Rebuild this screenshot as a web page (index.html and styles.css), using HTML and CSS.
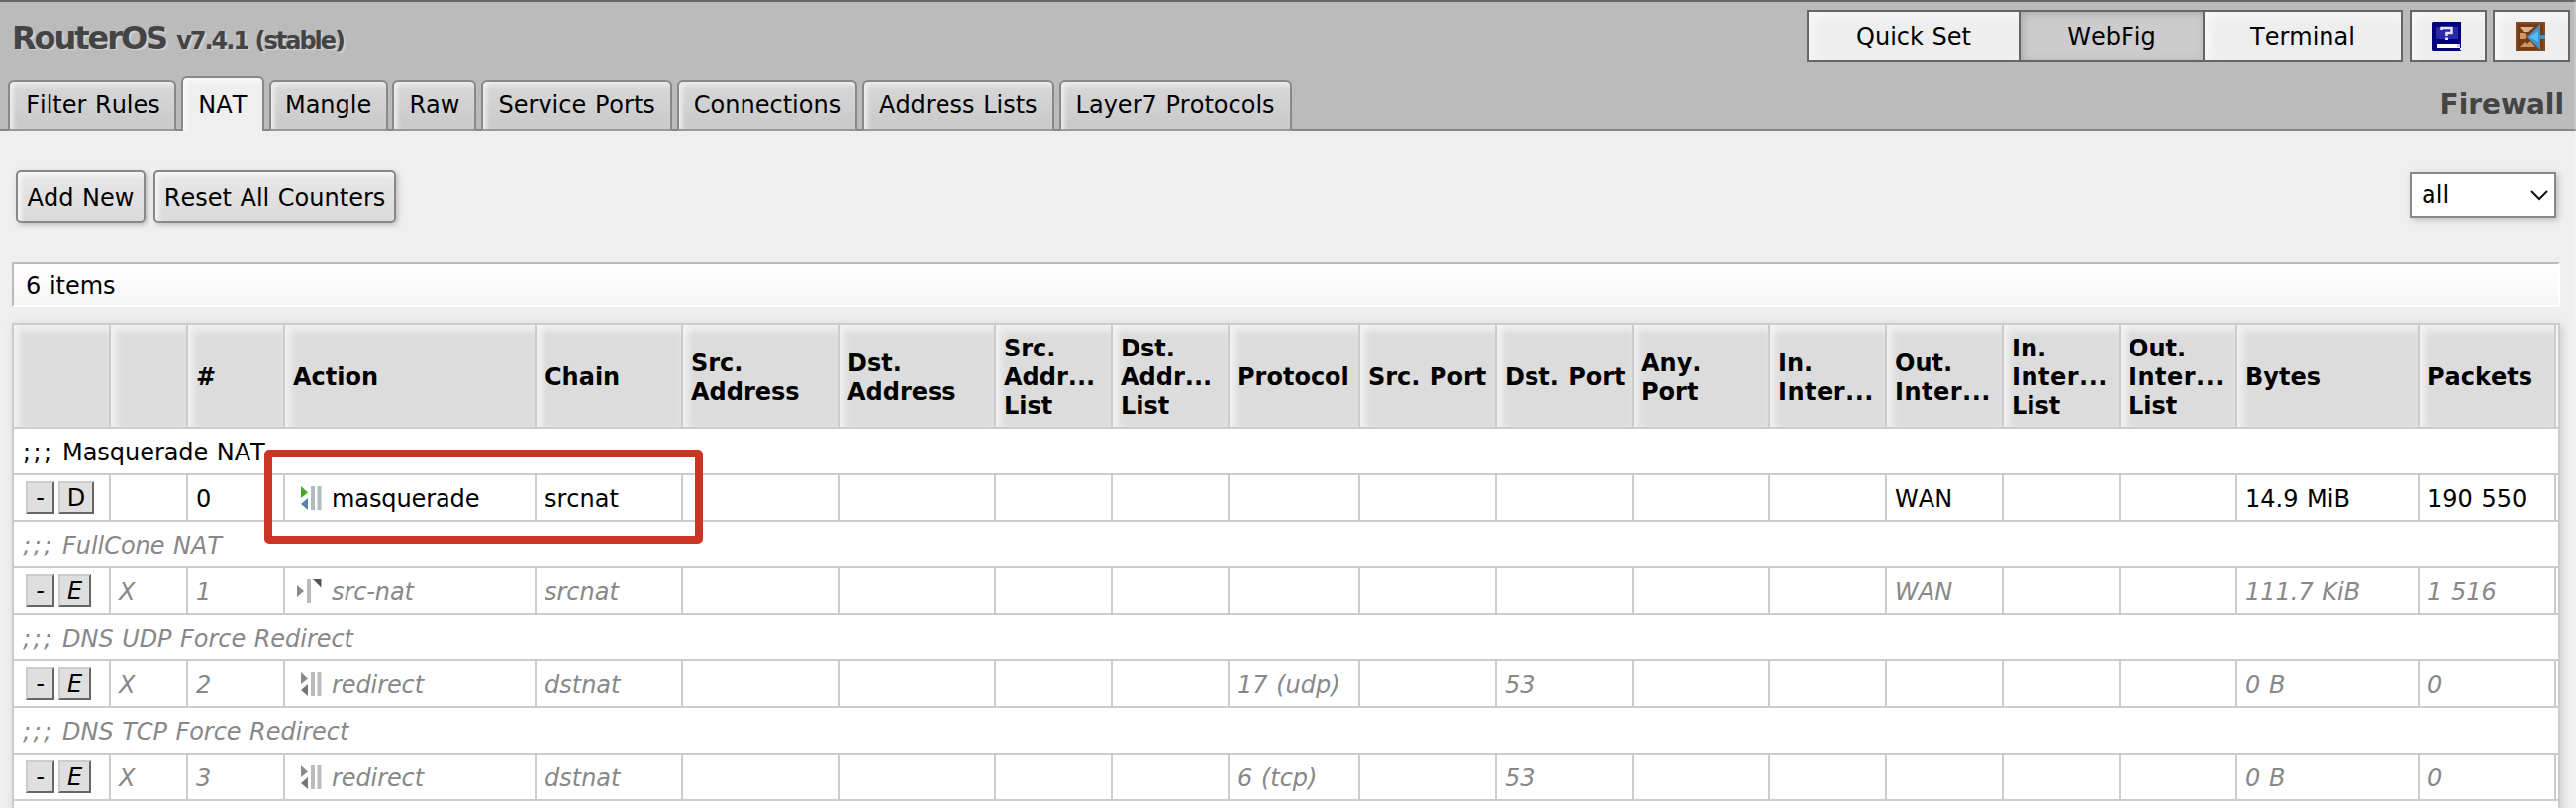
FILE: index.html
```html
<!DOCTYPE html>
<html lang="en">
<head>
<meta charset="utf-8">
<title>RouterOS - Firewall NAT</title>
<link rel="stylesheet" href="styles.css">
</head>
<body>
<svg width="0" height="0" class="defs">
  <symbol id="redirect" viewBox="0 0 32 32"><path class="a" d="M8 4L15 10.500L8 16z"/><path class="b" d="M15 16V28L8 22z"/><path class="c" d="M18 4h4v24h-4zM24.500 4h4v24h-4z"/></symbol>
  <symbol id="srcnat" viewBox="0 0 32 32"><path class="a" d="M4 10L11 16L4 22z"/><path class="c" d="M14 4h4v24h-4z"/><path class="d" d="M20 4h8.500v8.500z"/></symbol>
</svg>
<header class="top">
  <div class="brand-row">
    <h1 class="brand">RouterOS <small>v7.4.1 (stable)</small></h1>
    <nav class="modes">
      <div class="group"><a class="quick">Quick Set</a><a class="webfig">WebFig</a><a class="term">Terminal</a></div>
      <a class="tool"><svg width="30" height="30" viewBox="0 0 30 30"><path fill="#00007c" d="M1 0h28v26h-1v2h1v2H1L0 29V1z"/><path fill="#2a2aa5" d="M4 5h22v12H4z"/><path fill="none" stroke="#e4e4f6" stroke-width="2.500" d="M9.500 8V6h10v5h-5v3"/><path fill="#e4e4f6" d="M13 15.500h3v2.500h-3z"/><path fill="#fff" d="M5 22h23v4H5z"/><path fill="#c9cfd4" d="M25 22h3v3h-3z"/></svg></a>
      <a class="tool"><svg width="30" height="30" viewBox="0 0 30 30"><path fill="#84491f" d="M0 0h30v30H0z"/><path fill="#733b16" d="M2 2h26v26H2z"/><path fill="#dfb28c" d="M4 5h15l-6 5H8z"/><path fill="#cf9566" d="M4 11h5l3 3-3 3H4zM4 25l5-5 3 2 3-3 5 6z"/><path fill="#3c93d0" d="M25 2v11h5v4h-5v11L12 15z"/><path fill="#5cb8f2" d="M23 9v11l-9-5z"/></svg></a>
    </nav>
  </div>
  <div class="tab-row">
    <nav class="tabs">
      <a class="tab t1">Filter Rules</a><a class="tab t2 active">NAT</a><a class="tab t3">Mangle</a><a class="tab t4">Raw</a><a class="tab t5">Service Ports</a><a class="tab t6">Connections</a><a class="tab t7">Address Lists</a><a class="tab t8">Layer7 Protocols</a>
    </nav>
    <h2 class="page">Firewall</h2>
  </div>
</header>
<main>
  <div class="toolbar">
    <a class="btn add">Add New</a><a class="btn reset">Reset All Counters</a>
    <div class="select">all<svg width="20" height="12" viewBox="0 0 20 12"><path d="M2 2L10 10L18 2" fill="none" stroke="#111" stroke-width="2"/></svg></div>
  </div>
  <div class="count">6 items</div>
  <table class="list">
    <colgroup><col class="w98"><col class="w78"><col class="w98"><col class="w254"><col class="w148"><col class="w158"><col class="w158"><col class="w118"><col class="w118"><col class="w132"><col class="w138"><col class="w138"><col class="w138"><col class="w118"><col class="w118"><col class="w118"><col class="w118"><col class="w184"><col class="w138"><col class="w2"></colgroup>
    <thead><tr><th></th><th></th><th>#</th><th>Action</th><th>Chain</th><th>Src.<br>Address</th><th>Dst.<br>Address</th><th>Src.<br>Addr...<br>List</th><th>Dst.<br>Addr...<br>List</th><th>Protocol</th><th>Src. Port</th><th>Dst. Port</th><th>Any.<br>Port</th><th>In.<br><span class="int">Inter...</span></th><th>Out.<br><span class="int">Inter...</span></th><th>In.<br><span class="int">Inter...</span><br>List</th><th>Out.<br><span class="int">Inter...</span><br>List</th><th>Bytes</th><th>Packets</th><th class="end"></th></tr></thead>
    <tbody>
      <tr><td class="note" colspan="20"><span class="semi">;;;</span> Masquerade NAT</td></tr>
      <tr><td class="ops"><div><b>-</b><b class="wide">D</b></div></td><td></td><td>0</td><td><div class="act"><svg class="ico color"><use href="#redirect"/></svg>masquerade</div></td><td>srcnat</td><td></td><td></td><td></td><td></td><td></td><td></td><td></td><td></td><td></td><td>WAN</td><td></td><td></td><td>14.9 MiB</td><td>190 550</td><td class="end"></td></tr>
    </tbody>
    <tbody class="off">
      <tr><td class="note" colspan="20"><span class="semi">;;;</span> FullCone NAT</td></tr>
      <tr><td class="ops"><div><b>-</b><b class="mid">E</b></div></td><td>X</td><td>1</td><td><div class="act"><svg class="ico"><use href="#srcnat"/></svg>src-nat</div></td><td>srcnat</td><td></td><td></td><td></td><td></td><td></td><td></td><td></td><td></td><td></td><td>WAN</td><td></td><td></td><td>111.7 KiB</td><td>1 516</td><td class="end"></td></tr>
      <tr><td class="note" colspan="20"><span class="semi">;;;</span> DNS UDP Force Redirect</td></tr>
      <tr><td class="ops"><div><b>-</b><b class="mid">E</b></div></td><td>X</td><td>2</td><td><div class="act"><svg class="ico"><use href="#redirect"/></svg>redirect</div></td><td>dstnat</td><td></td><td></td><td></td><td></td><td>17 (udp)</td><td></td><td>53</td><td></td><td></td><td></td><td></td><td></td><td>0 B</td><td>0</td><td class="end"></td></tr>
      <tr><td class="note" colspan="20"><span class="semi">;;;</span> DNS TCP Force Redirect</td></tr>
      <tr><td class="ops"><div><b>-</b><b class="mid">E</b></div></td><td>X</td><td>3</td><td><div class="act"><svg class="ico"><use href="#redirect"/></svg>redirect</div></td><td>dstnat</td><td></td><td></td><td></td><td></td><td>6 (tcp)</td><td></td><td>53</td><td></td><td></td><td></td><td></td><td></td><td>0 B</td><td>0</td><td class="end"></td></tr>
      <tr><td class="note" colspan="20"></td></tr>
    </tbody>
  </table>
</main>
<div class="marker"></div>
<div class="edge"></div>
</body>
</html>
```
FILE: styles.css
```css
* { box-sizing: border-box; }
html, body { height: 816px; overflow: hidden; }
body {
  margin: 0;
  position: relative;
  background: #efefef;
  color: #000;
  font: 24px/29px "DejaVu Sans", Verdana, sans-serif;
  font-kerning: none;
  word-spacing: 1px;
}
.defs { position: absolute; }

/* Header */
.top {
  height: 132px;
  background: #bbb;
  border-top: 2px solid #646469;
  border-bottom: 2px solid #888;
}
.brand-row { display: flex; justify-content: space-between; height: 75px; padding: 8px 6px 0 12px; }
.brand {
  margin: 0;
  padding-top: 9px;
  font-size: 32px;
  line-height: 38px;
  letter-spacing: -2.050px;
  color: #444;
  text-shadow: 2px 2px 1px #d0d0d0;
}
.brand small { font-size: 24px; letter-spacing: -2px; }
.modes { display: flex; gap: 6px; }
.group { display: flex; margin-right: 1px; border: 2px solid #666; height: 53px; }
.group a {
  padding-top: 11px;
  text-align: center;
  background: #eee;
  box-shadow: inset 4px 4px 8px #fafafa;
}
.group a + a { border-left: 2px solid #666; }
.group .quick { width: 212px; }
.group .webfig { width: 186px; background: #ccc; box-shadow: inset 2px 2px 8px #aaa; }
.group .term { width: 200px; }
.tool {
  display: flex;
  align-items: center;
  justify-content: center;
  width: 78px;
  height: 53px;
  padding-right: 2px;
  border: 2px solid #666;
  background: #eee;
  box-shadow: inset 4px 4px 8px #fafafa;
}
.tab-row { display: flex; justify-content: space-between; height: 55px; padding: 0 12px 0 8px; }
.tabs { display: flex; align-items: flex-end; gap: 4.800px; }
.tab {
  height: 51px;
  padding-top: 9px;
  text-align: center;
  white-space: nowrap;
  border: 2px solid #888;
  border-bottom-color: #999;
  border-radius: 6px 6px 0 0;
  background: linear-gradient(#d8d8d8, #c9c9c9);
  box-shadow: inset 3px 3px 5px #f0f0f0;
}
.tab.active {
  height: 55px;
  padding-top: 13px;
  border-bottom: 0;
  background: #efefef;
  box-shadow: inset 3px 3px 5px #fafafa;
}
.t1 { width: 170px; padding-left: 2px; }
.t2 { width: 84px; }
.t3 { width: 120px; }
.t4 { width: 85px; }
.t5 { width: 193px; }
.t6 { width: 182px; }
.t7 { width: 194px; }
.t8 { width: 235px; }
.page { margin: 0; padding-top: 12px; font-size: 28px; line-height: 33px; color: #444; }

/* Toolbar */
.toolbar { display: flex; gap: 8px; height: 133px; padding: 40px 20px 0 16px; }
.btn {
  height: 53px;
  padding-top: 12px;
  text-align: center;
  border: 2px solid #888;
  border-radius: 5px;
  background: linear-gradient(#e8e8e8, #dadada);
  box-shadow: inset 3px 3px 5px #f8f8f8, 2px 2px 5px #bbb;
}
.add { width: 131px; }
.reset { width: 245px; }
.select {
  display: flex;
  align-items: center;
  justify-content: space-between;
  width: 148px;
  height: 46px;
  margin: 2px 0 0 auto;
  padding: 0 5px 0 10px;
  border: 2px solid #888;
  background: #fff;
  box-shadow: 2px 2px 6px #bbb;
}

.count {
  height: 45px;
  margin: 0 16px 16px 12px;
  padding: 8px 0 0 12px;
  border: 2px solid #fff;
  border-top-color: #bbb;
  border-left-color: #bbb;
  background: linear-gradient(#fff, #f5f5f5);
}

/* Rule table */
.list {
  width: 2574px;
  margin-left: 12px;
  table-layout: fixed;
  border-collapse: separate;
  border-spacing: 0;
  border: 2px solid #ccc;
  border-bottom: 0;
  background: #fff;
  box-shadow: 2px 2px 8px #ccc;
}
.w2 { width: 2px; }
.w78 { width: 78px; }
.w98 { width: 98px; }
.w118 { width: 118px; }
.w132 { width: 132px; }
.w138 { width: 138px; }
.w148 { width: 148px; }
.w158 { width: 158px; }
.w184 { width: 184px; }
.w254 { width: 254px; }
.list th, .list td {
  height: 47px;
  padding: 3px 0 0 8px;
  text-align: left;
  vertical-align: middle;
  white-space: nowrap;
  border-right: 2px solid #ccc;
  border-bottom: 2px solid #ccc;
}
.list th {
  height: 105px;
  padding-top: 4px;
  background: #dcdcdc;
  box-shadow: inset 4px 4px 8px #f6f6f6;
}
.list .int { letter-spacing: .500px; }
.list .end { padding: 0; border-right: 0; }
.list th.end { background: #f4f4f4; }
.list .note { padding-left: 7px; border-right: 0; letter-spacing: -.050px; }
.list .semi { letter-spacing: 2.400px; margin-left: 2px; }
.list .ops { padding: 0 0 0 12px; }
.ops div { display: flex; gap: 4px; }
.ops b {
  width: 29px;
  height: 33px;
  padding-top: 1px;
  font-weight: normal;
  text-align: center;
  color: #000;
  border: 2px solid #ccc;
  border-right-color: #666;
  border-bottom-color: #666;
  background: #dfdfdf;
}
.ops .wide { width: 36px; }
.ops .mid { width: 33px; }
.act { display: flex; align-items: center; letter-spacing: -.100px; }
.ico {
  --a: #8a8a8a;
  --b: #777;
  --c: #bbb;
  --d: #555;
  width: 32px;
  height: 32px;
  margin: -4px 7px -2px 0;
}
.ico.color { --a: #48a82c; --b: #5b82ac; --c: #b0bcbb; }
.a { fill: var(--a); }
.b { fill: var(--b); }
.c { fill: var(--c); }
.d { fill: var(--d); }
.off { color: #888; font-style: italic; }

/* Highlight drawn over the masquerade rule */
.marker {
  position: absolute;
  left: 267px;
  top: 454px;
  width: 443px;
  height: 95px;
  border: 8px solid #cb3524;
  border-radius: 5px;
}
.edge { position: absolute; right: 0; top: 0; width: 2px; height: 816px; background: rgba(255, 255, 255, .2); }
```
